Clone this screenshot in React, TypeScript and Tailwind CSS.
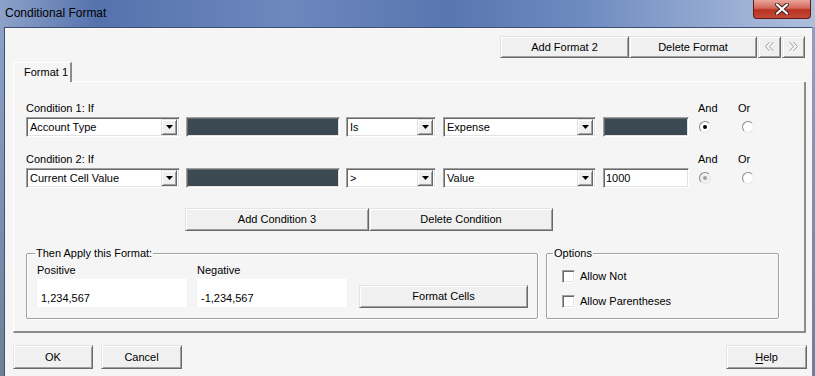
import type { ReactNode } from "react";

const raised =
  "flex items-center justify-center bg-[#f0f0f0] border border-t-[#e3e3e3] border-l-[#e3e3e3] border-r-[#696969] border-b-[#696969] shadow-[inset_1px_1px_0_#ffffff,inset_-1px_-1px_0_#a0a0a0]";
const sunken =
  "border border-t-[#a0a0a0] border-l-[#a0a0a0] border-r-white border-b-white shadow-[inset_1px_1px_0_#696969,inset_-1px_-1px_0_#e3e3e3]";

function Button({ className = "", children }: { className?: string; children?: ReactNode }) {
  return <div className={`${raised} ${className}`}>{children}</div>;
}

function Chevrons({ left }: { left?: boolean }) {
  const d = left ? "M5.5 1L1.5 5.5L5.5 10M9.5 1L5.5 5.5L9.5 10" : "M1.5 1L5.5 5.5L1.5 10M5.5 1L9.5 5.5L5.5 10";
  return (
    <svg width="12" height="12" viewBox="0 0 12 12">
      <path d={d} transform="translate(1 1)" stroke="#ffffff" strokeWidth="1" fill="none" />
      <path d={d} stroke="#a0a0a0" strokeWidth="1" fill="none" />
    </svg>
  );
}

function Select({ w, value }: { w: string; value: string }) {
  return (
    <div className={`${sunken} ${w} h-[20px] bg-white flex items-center pl-[3px] pr-[2px]`}>
      <span className="flex-1 leading-[13px]">{value}</span>
      <div className={`${raised} w-[16px] h-[16px]`}>
        <svg width="7" height="4" viewBox="0 0 7 4">
          <path d="M0 0h7L3.5 4z" fill="#000" />
        </svg>
      </div>
    </div>
  );
}

function DarkBox({ w }: { w: string }) {
  return <div className={`${sunken} ${w} h-[20px] bg-[#3b4a52]`} />;
}

function Radio({ checked = false, disabled = false }: { checked?: boolean; disabled?: boolean }) {
  return (
    <div
      className={`w-[12px] h-[12px] rounded-full border border-t-[#8a8a8a] border-l-[#8a8a8a] border-r-[#e8e8e8] border-b-[#e8e8e8] flex items-center justify-center ${
        disabled ? "bg-[#f0f0f0]" : "bg-white"
      }`}
    >
      {checked && (
        <div className={`w-[4px] h-[4px] rounded-full ${disabled ? "bg-[#a0a0a0]" : "bg-black"}`} />
      )}
    </div>
  );
}

function Check({ label }: { label: string }) {
  return (
    <div className="flex items-center h-[13px]">
      <div className={`${sunken} w-[13px] h-[13px] bg-white`} />
      <span className="ml-[5px] leading-[13px]">{label}</span>
    </div>
  );
}

function Condition({
  n,
  field,
  op,
  value,
  last,
  disabledAnd,
}: {
  n: number;
  field: string;
  op: string;
  value: string;
  last: ReactNode;
  disabledAnd?: boolean;
}) {
  return (
    <div>
      <div className="flex h-[13px] leading-[13px]">
        <span className="w-[672px]">Condition {n}: If</span>
        <span className="w-[40px]">And</span>
        <span>Or</span>
      </div>
      <div className="flex items-center mt-[2px]">
        <Select w="w-[154px]" value={field} />
        <div className="ml-[6px]">
          <DarkBox w="w-[154px]" />
        </div>
        <div className="ml-[6px]">
          <Select w="w-[90px]" value={op} />
        </div>
        <div className="ml-[7px]">
          <Select w="w-[153px]" value={value} />
        </div>
        <div className="ml-[7px]">{last}</div>
        <div className="ml-[10px]">
          <Radio checked disabled={disabledAnd} />
        </div>
        <div className="ml-[31px]">
          <Radio />
        </div>
      </div>
    </div>
  );
}

export default function App() {
  return (
    <div className="w-[815px] h-[376px] overflow-hidden flex flex-col bg-gradient-to-b from-[#8ea3cc] to-[#6d8098] font-['Liberation_Sans',Arial,sans-serif] text-[11px] text-black">
      {/* title bar */}
      <div className="h-[27px] flex items-start bg-[linear-gradient(90deg,#8da2c9_0%,#5572ad_12%,#6d88bd_35%,#5876b0_55%,#6f8cc0_72%,#9fb2d6_92%,#aebfdc_100%)]">
        <span className="ml-[5px] mt-[6px] text-[12px] leading-[15px] text-black">Conditional Format</span>
        <div className="ml-auto mr-[4px] w-[58px] h-[19px] rounded-b-[4px] border border-t-0 border-[#5c1c14] bg-[linear-gradient(180deg,#e9a59c_0%,#d3665a_45%,#b7321f_55%,#c4493a_100%)] flex items-center justify-center">
          <svg width="14" height="12" viewBox="0 0 14 12">
            <path d="M2 1.5L12 10.5M12 1.5L2 10.5" stroke="#3a2020" strokeWidth="4" strokeLinecap="round" />
            <path d="M2 1.5L12 10.5M12 1.5L2 10.5" stroke="#ffffff" strokeWidth="2.2" strokeLinecap="round" />
          </svg>
        </div>
      </div>

      {/* client area */}
      <div className="flex-1 ml-[4px] mr-[3px] border-l border-t border-[#3d4f73] bg-[#f5f5f5] flex flex-col">
        {/* top buttons */}
        <div className="flex justify-end mt-[8px] mr-[7px] h-[22px]">
          <Button className="w-[129px] h-[22px]">Add Format 2</Button>
          <Button className="w-[128px] h-[22px]">Delete Format</Button>
          <Button className="ml-[1px] w-[23px] h-[22px]">
            <Chevrons left />
          </Button>
          <Button className="ml-[1px] w-[23px] h-[22px]">
            <Chevrons />
          </Button>
        </div>

        {/* tab strip */}
        <div className="flex ml-[8px] mr-[6px] mt-[4px] h-[20px]">
          <div className="w-[59px] h-[20px] border-t border-l border-white border-r-2 border-r-[#8c8c8c] rounded-tl-[2px] pl-[10px] flex items-center leading-[13px]">
            Format 1
          </div>
          <div className="flex-1 border-b border-white" />
        </div>

        {/* tab panel */}
        <div className="ml-[8px] mr-[6px] h-[251px] border-l border-white border-r-2 border-r-[#8c8c8c] border-b-2 border-b-[#8c8c8c] pl-[12px] pt-[20px]">
          <Condition
            n={1}
            field="Account Type"
            op="Is"
            value="Expense"
            last={<DarkBox w="w-[86px]" />}
          />
          <div className="mt-[16px]">
            <Condition
              n={2}
              field="Current Cell Value"
              op=">"
              value="Value"
              disabledAnd
              last={
                <div className={`${sunken} w-[86px] h-[20px] bg-white flex items-center pl-[2px] leading-[13px]`}>
                  1000
                </div>
              }
            />
          </div>

          <div className="flex mt-[20px] ml-[159px]">
            <Button className="w-[184px] h-[23px]">Add Condition 3</Button>
            <Button className="w-[184px] h-[23px]">Delete Condition</Button>
          </div>

          <div className="flex mt-[16px]">
            <fieldset className="w-[512px] h-[72px] border border-[#a0a0a0] shadow-[inset_1px_1px_0_#ffffff,1px_1px_0_#ffffff] rounded-[2px]">
              <legend className="ml-[8px] px-[1px] leading-[13px]">Then Apply this Format:</legend>
              <div className="flex mt-[4px] pl-[10px]">
                <div className="w-[150px]">
                  <div className="leading-[13px] h-[13px]">Positive</div>
                  <div className="mt-[2px] h-[28px] bg-white pl-[4px] pt-[13px] leading-[13px]">1,234,567</div>
                </div>
                <div className="w-[150px] ml-[10px]">
                  <div className="leading-[13px] h-[13px]">Negative</div>
                  <div className="mt-[2px] h-[28px] bg-white pl-[4px] pt-[13px] leading-[13px]">-1,234,567</div>
                </div>
                <Button className="self-end mb-[-1px] ml-[12px] w-[169px] h-[23px]">Format Cells</Button>
              </div>
            </fieldset>
            <fieldset className="ml-[8px] w-[233px] h-[72px] border border-[#a0a0a0] shadow-[inset_1px_1px_0_#ffffff,1px_1px_0_#ffffff] rounded-[2px]">
              <legend className="ml-[6px] px-[1px] leading-[13px]">Options</legend>
              <div className="mt-[10px] pl-[15px]">
                <Check label="Allow Not" />
                <div className="mt-[12px]">
                  <Check label="Allow Parentheses" />
                </div>
              </div>
            </fieldset>
          </div>
        </div>

        {/* bottom buttons */}
        <div className="flex mt-[12px] ml-[8px] mr-[5px]">
          <Button className="w-[80px] h-[24px]">OK</Button>
          <Button className="ml-[8px] w-[81px] h-[24px]">Cancel</Button>
          <Button className="ml-auto w-[81px] h-[24px]">
            <span>
              <span className="underline underline-offset-2">H</span>elp
            </span>
          </Button>
        </div>
      </div>
    </div>
  );
}
